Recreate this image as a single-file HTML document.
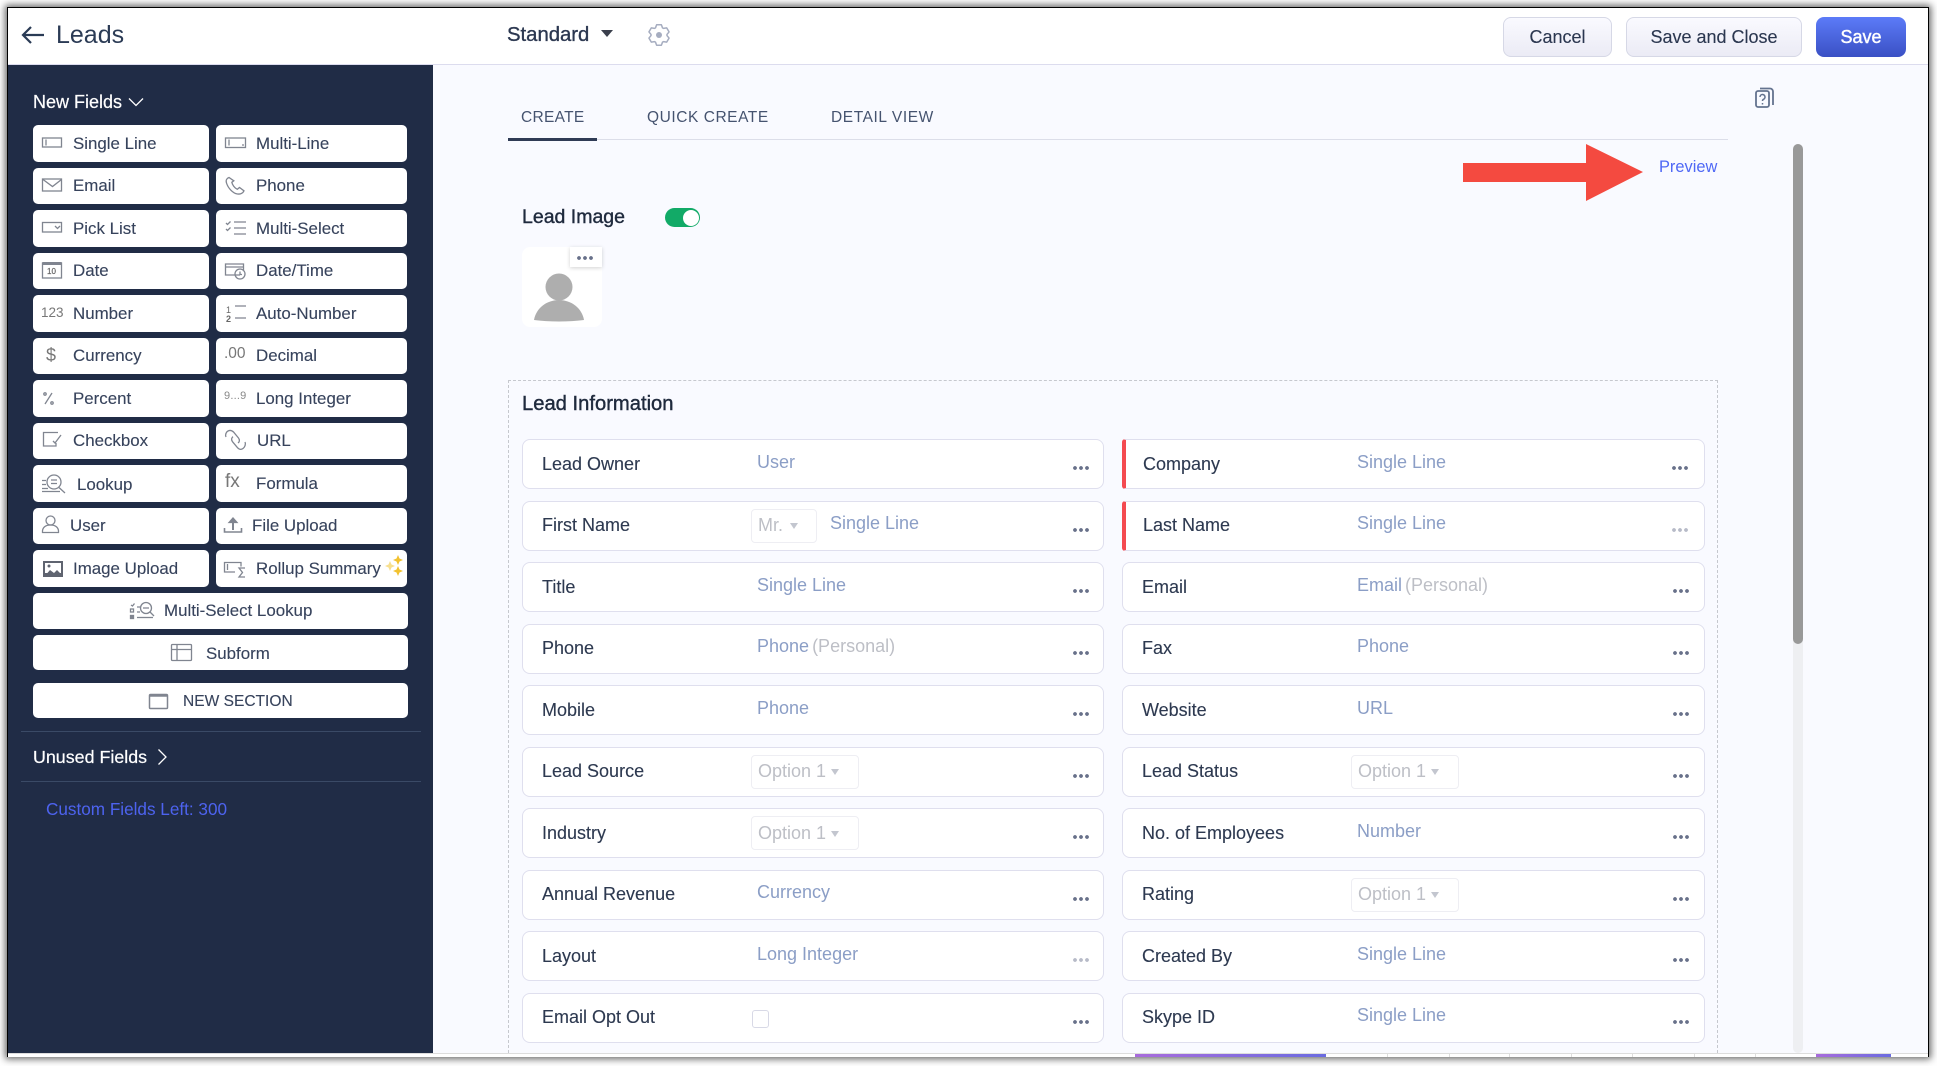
<!DOCTYPE html>
<html><head><meta charset="utf-8"><title>Leads</title>
<style>
*{box-sizing:border-box}
html,body{margin:0;padding:0;width:1937px;height:1066px;overflow:hidden;background:#fff;font-family:"Liberation Sans",sans-serif}
#win{position:absolute;left:7px;top:7px;width:1922px;height:1050px;background:#000;box-shadow:0 0 7px 2px #666}
.a{position:absolute}
.t{position:absolute;white-space:nowrap;line-height:20px}
#head{left:8px;top:8px;width:1920px;height:57px;background:#fff;border-bottom:1px solid #dcdcee}
#main{left:8px;top:65px;width:1920px;height:988px;background:#f9faff}
#side{left:8px;top:65px;width:425px;height:988px;background:#202c46}
#strip{left:8px;top:1053px;width:1920px;height:4px;background:#fff;border-top:1px solid #ddd}
.b{position:absolute;background:#fff;border-radius:5px}
.s{font-size:16.9px;color:#37435c;margin-top:1px;-webkit-text-stroke:.12px #37435c}
.btn{position:absolute;top:17px;height:40px;border-radius:8px;border:1px solid #d6d8e6;background:linear-gradient(#fafaff,#ebebf5);color:#2b3750;font-size:18px;text-align:center;line-height:38px;-webkit-text-stroke:.12px #2b3750}
.row{position:absolute;width:582px;height:50px;background:#fff;border:1px solid #dfdfee;border-radius:8px}
.row.c2{width:583px}
.row.r{border-left:4px solid #f44a50;border-radius:3px 8px 8px 3px}
.row.r .lb{left:17px}.row.r .v{left:231px}
.lb{position:absolute;left:19px;top:13px;font-size:18px;line-height:20px;color:#2d3950;white-space:nowrap;-webkit-text-stroke:.12px #2d3950}
.v{position:absolute;left:234px;top:12px;font-size:18px;line-height:20px;color:#8b9ec6;white-space:nowrap}
.g{color:#bdbfc6;margin-left:-2px}
.d{position:absolute;left:549px;top:26px;width:18px;height:4px;background-image:radial-gradient(circle at 50% 50%,#68718a 1.7px,transparent 2.1px);background-size:6px 4px}
.d.f{background-image:radial-gradient(circle at 50% 50%,#b7bbc8 1.7px,transparent 2.1px)}
.row.c2 .d{left:549px}
.row.c2.r .d{left:545px}
.o{position:absolute;left:228px;top:7px;height:34px;border:1px solid #eeeef3;border-radius:4px;background:#fff}
.o span{position:absolute;left:6px;top:6px;font-size:18px;line-height:20px;color:#bdbfc6;white-space:nowrap}
.o i{position:absolute;top:14px;width:0;height:0;border-left:4.5px solid transparent;border-right:4.5px solid transparent;border-top:6px solid #c3c6cf}
.u .lb{top:14px}
.e .v{top:11px}
.e .o span{top:5px}
.e .o i{top:13px}
</style></head><body>
<div id="win" class="a"></div>
<div id="main" class="a"></div>
<div id="head" class="a"></div>
<div id="side" class="a"></div>

<!-- Header -->
<svg class="a" style="left:20px;top:24px" width="26" height="22" viewBox="0 0 26 22"><path d="M24 11H3M11 3l-8 8 8 8" fill="none" stroke="#2a3b55" stroke-width="2.2"/></svg>
<div class="t" style="left:56px;top:25px;font-size:25px;color:#2b3b55">Leads</div>
<div class="t" style="left:507px;top:25px;font-size:20.300px;color:#2b3750;-webkit-text-stroke:.35px #2b3750">Standard</div>
<svg class="a" style="left:600px;top:30px" width="14" height="8"><path d="M1 0h12L7 7z" fill="#3a3f4c"/></svg>
<svg class="a" style="left:647px;top:23px" width="24" height="24" viewBox="0 0 24 24"><path d="M8.500 4.810L9.640 1.770H14.360L15.500 4.810L16.470 5.370L19.680 4.840L22.040 8.930L19.980 11.440V12.560L22.040 15.070L19.680 19.160L16.470 18.630L15.500 19.190L14.360 22.230H9.640L8.500 19.190L7.530 18.630L4.320 19.160L1.960 15.070L4.020 12.560V11.440L1.960 8.930L4.320 4.840L7.530 5.370Z" fill="none" stroke="#a6adc0" stroke-width="1.500" stroke-linejoin="round"/><circle cx="12" cy="12" r="3" fill="#a6adc0"/></svg>
<div class="btn" style="left:1503px;width:109px">Cancel</div>
<div class="btn" style="left:1626px;width:176px">Save and Close</div>
<div class="btn" style="left:1816px;width:90px;border:0;border-radius:8px;line-height:40px;background:linear-gradient(#5c7bf8,#3a50c4);color:#fff;-webkit-text-stroke:.4px #fff">Save</div>

<!-- Tabs -->
<div class="t" style="left:521px;top:108px;font-size:15.500px;color:#45536f;letter-spacing:.3px">CREATE</div>
<div class="t" style="left:647px;top:108px;font-size:15.500px;color:#45536f;letter-spacing:.55px">QUICK CREATE</div>
<div class="t" style="left:831px;top:108px;font-size:15.500px;color:#45536f;letter-spacing:.58px">DETAIL VIEW</div>
<div class="a" style="left:508px;top:139px;width:1220px;height:1px;background:#dcdee9"></div>
<div class="a" style="left:508px;top:138px;width:89px;height:3px;background:#2f3b55"></div>
<div class="t" style="left:1659px;top:157px;font-size:16.400px;color:#4f68f5">Preview</div>
<svg class="a" style="left:1463px;top:144px" width="181" height="58"><path d="M0 19H123V0L180 28 123 57V38H0z" fill="#f44a40"/></svg>
<svg class="a" style="left:1755px;top:87px" width="20" height="22" viewBox="0 0 20 22" fill="none" stroke="#64738f" stroke-width="1.800"><rect x="1" y="4" width="13" height="16" rx="2"/><path d="M5 1.500h10a3 3 0 0 1 3 3V18"/><path d="M5 10a2.500 2.500 0 1 1 3.500 2.300c-.8.400-1 .9-1 1.700M7.500 16v1.500" stroke-width="1.500"/></svg>
<div class="a" style="left:1793px;top:144px;width:10px;height:909px;background:#eeeff2;border-radius:5px"></div>
<div class="a" style="left:1793px;top:144px;width:10px;height:500px;background:#999;border-radius:5px"></div>

<!-- Lead image -->
<div class="t" style="left:522px;top:207px;font-size:19.500px;color:#1f2a3d;-webkit-text-stroke:.4px #1f2a3d">Lead Image</div>
<div class="a" style="left:665px;top:208px;width:35px;height:19px;border-radius:10px;background:#12aa67"></div>
<div class="a" style="left:683px;top:210px;width:16px;height:16px;border-radius:50%;background:#fff"></div>
<div class="a" style="left:522px;top:247px;width:80px;height:80px;background:#fff;border-radius:8px"></div>
<svg class="a" style="left:530px;top:270px" width="60" height="56"><circle cx="29" cy="17" r="13.500" fill="#aeaeae"/><path d="M4 50C6 38 17 30 29 30s23 8 25 20c-15 2-35 2-50 0z" fill="#aeaeae"/></svg>
<div class="a" style="left:570px;top:247px;width:32px;height:20px;background:#fff;box-shadow:0 1px 4px rgba(0,0,0,.18)"></div>
<div class="d" style="left:576px;top:256px"></div>

<!-- Section -->
<div class="a" style="left:508px;top:380px;width:1210px;height:673px;border:1px dashed #c6c8ce;border-bottom:0"></div>
<div class="t" style="left:522px;top:394px;font-size:20.200px;color:#1f2a3d;-webkit-text-stroke:.4px #1f2a3d">Lead Information</div>

<div class="row u" style="left:522px;top:439px"><span class="lb">Lead Owner</span><span class="v">User</span><i class="d"></i></div>
<div class="row e" style="left:522px;top:501px"><span class="lb">First Name</span><div class="o" style="width:66px"><span>Mr.</span><i style="left:38px"></i></div><span class="v" style="left:307px">Single Line</span><i class="d"></i></div>
<div class="row u" style="left:522px;top:562px"><span class="lb">Title</span><span class="v">Single Line</span><i class="d"></i></div>
<div class="row e" style="left:522px;top:624px"><span class="lb">Phone</span><span class="v">Phone <span class="g">(Personal)</span></span><i class="d"></i></div>
<div class="row u" style="left:522px;top:685px"><span class="lb">Mobile</span><span class="v">Phone</span><i class="d"></i></div>
<div class="row e" style="left:522px;top:747px"><span class="lb">Lead Source</span><div class="o" style="width:108px"><span>Option 1</span><i style="left:79px"></i></div><i class="d"></i></div>
<div class="row u" style="left:522px;top:808px"><span class="lb">Industry</span><div class="o" style="width:108px"><span>Option 1</span><i style="left:79px"></i></div><i class="d"></i></div>
<div class="row e" style="left:522px;top:870px"><span class="lb">Annual Revenue</span><span class="v">Currency</span><i class="d"></i></div>
<div class="row u" style="left:522px;top:931px"><span class="lb">Layout</span><span class="v">Long Integer</span><i class="d f"></i></div>
<div class="row e" style="left:522px;top:993px"><span class="lb">Email Opt Out</span><div class="a" style="left:229px;top:16px;width:17px;height:18px;border:1.500px solid #d8d9e6;border-radius:3px"></div><i class="d"></i></div>

<div class="row c2 r u" style="left:1122px;top:439px"><span class="lb">Company</span><span class="v">Single Line</span><i class="d"></i></div>
<div class="row c2 r e" style="left:1122px;top:501px"><span class="lb">Last Name</span><span class="v">Single Line</span><i class="d f"></i></div>
<div class="row c2 u" style="left:1122px;top:562px"><span class="lb">Email</span><span class="v">Email <span class="g">(Personal)</span></span><i class="d"></i></div>
<div class="row c2 e" style="left:1122px;top:624px"><span class="lb">Fax</span><span class="v">Phone</span><i class="d"></i></div>
<div class="row c2 u" style="left:1122px;top:685px"><span class="lb">Website</span><span class="v">URL</span><i class="d"></i></div>
<div class="row c2 e" style="left:1122px;top:747px"><span class="lb">Lead Status</span><div class="o" style="width:108px"><span>Option 1</span><i style="left:79px"></i></div><i class="d"></i></div>
<div class="row c2 u" style="left:1122px;top:808px"><span class="lb">No. of Employees</span><span class="v">Number</span><i class="d"></i></div>
<div class="row c2 e" style="left:1122px;top:870px"><span class="lb">Rating</span><div class="o" style="width:108px"><span>Option 1</span><i style="left:79px"></i></div><i class="d"></i></div>
<div class="row c2 u" style="left:1122px;top:931px"><span class="lb">Created By</span><span class="v">Single Line</span><i class="d"></i></div>
<div class="row c2 e" style="left:1122px;top:993px"><span class="lb">Skype ID</span><span class="v">Single Line</span><i class="d"></i></div>

<!-- Bottom strip -->
<div id="strip" class="a"></div>
<div class="a" style="left:1135px;top:1054px;width:191px;height:3px;background:linear-gradient(90deg,#a86bdc,#6a6be0)"></div>
<div class="a" style="left:1387px;top:1054px;width:1px;height:3px;background:#ddd"></div>
<div class="a" style="left:1449px;top:1054px;width:1px;height:3px;background:#ddd"></div>
<div class="a" style="left:1509px;top:1054px;width:1px;height:3px;background:#ddd"></div>
<div class="a" style="left:1571px;top:1054px;width:1px;height:3px;background:#ddd"></div>
<div class="a" style="left:1632px;top:1054px;width:1px;height:3px;background:#ddd"></div>
<div class="a" style="left:1694px;top:1054px;width:1px;height:3px;background:#ddd"></div>
<div class="a" style="left:1755px;top:1054px;width:1px;height:3px;background:#ddd"></div>
<div class="a" style="left:1816px;top:1054px;width:75px;height:3px;background:linear-gradient(90deg,#a86bdc,#6a6be0)"></div>

<!-- Sidebar -->
<div class="t" style="left:33px;top:92px;font-size:18px;color:#fff;-webkit-text-stroke:.2px #fff">New Fields</div>
<svg class="a" style="left:128px;top:97px" width="16" height="11"><path d="M1 1.500l7 7 7-7" fill="none" stroke="#fff" stroke-width="1.300"/></svg>

<div class="b" style="left:33px;top:125px;width:176px;height:37px"></div><div class="b" style="left:216px;top:125px;width:191px;height:37px"></div>
<div class="b" style="left:33px;top:168px;width:176px;height:36px"></div><div class="b" style="left:216px;top:168px;width:191px;height:36px"></div>
<div class="b" style="left:33px;top:210px;width:176px;height:37px"></div><div class="b" style="left:216px;top:210px;width:191px;height:37px"></div>
<div class="b" style="left:33px;top:253px;width:176px;height:36px"></div><div class="b" style="left:216px;top:253px;width:191px;height:36px"></div>
<div class="b" style="left:33px;top:295px;width:176px;height:37px"></div><div class="b" style="left:216px;top:295px;width:191px;height:37px"></div>
<div class="b" style="left:33px;top:338px;width:176px;height:36px"></div><div class="b" style="left:216px;top:338px;width:191px;height:36px"></div>
<div class="b" style="left:33px;top:380px;width:176px;height:37px"></div><div class="b" style="left:216px;top:380px;width:191px;height:37px"></div>
<div class="b" style="left:33px;top:423px;width:176px;height:36px"></div><div class="b" style="left:216px;top:423px;width:191px;height:36px"></div>
<div class="b" style="left:33px;top:465px;width:176px;height:37px"></div><div class="b" style="left:216px;top:465px;width:191px;height:37px"></div>
<div class="b" style="left:33px;top:508px;width:176px;height:36px"></div><div class="b" style="left:216px;top:508px;width:191px;height:36px"></div>
<div class="b" style="left:33px;top:550px;width:176px;height:37px"></div><div class="b" style="left:216px;top:550px;width:191px;height:37px"></div>
<div class="b" style="left:33px;top:593px;width:375px;height:36px"></div>
<div class="b" style="left:33px;top:635px;width:375px;height:35px"></div>
<div class="b" style="left:33px;top:683px;width:375px;height:35px"></div>

<div class="t s" style="left:73px;top:133px">Single Line</div><div class="t s" style="left:256px;top:133px">Multi-Line</div>
<div class="t s" style="left:73px;top:175px">Email</div><div class="t s" style="left:256px;top:175px">Phone</div>
<div class="t s" style="left:73px;top:218px">Pick List</div><div class="t s" style="left:256px;top:218px">Multi-Select</div>
<div class="t s" style="left:73px;top:260px">Date</div><div class="t s" style="left:256px;top:260px">Date/Time</div>
<div class="t s" style="left:73px;top:303px">Number</div><div class="t s" style="left:256px;top:303px">Auto-Number</div>
<div class="t s" style="left:73px;top:345px">Currency</div><div class="t s" style="left:256px;top:345px">Decimal</div>
<div class="t s" style="left:73px;top:388px">Percent</div><div class="t s" style="left:256px;top:388px">Long Integer</div>
<div class="t s" style="left:73px;top:430px">Checkbox</div><div class="t s" style="left:257px;top:430px">URL</div>
<div class="t s" style="left:77px;top:474px">Lookup</div><div class="t s" style="left:256px;top:473px">Formula</div>
<div class="t s" style="left:70px;top:515px">User</div><div class="t s" style="left:252px;top:515px">File Upload</div>
<div class="t s" style="left:73px;top:558px">Image Upload</div><div class="t s" style="left:256px;top:558px">Rollup Summary</div>
<div class="t s" style="left:164px;top:600px">Multi-Select Lookup</div>
<div class="t s" style="left:206px;top:643px">Subform</div>
<div class="t s" style="left:183px;top:691px;font-size:15.550px">NEW SECTION</div>

<svg class="a" style="left:0;top:0" width="440" height="730" fill="none" stroke="#808590" stroke-width="1.300" font-family="Liberation Sans">
<!-- single line -->
<rect x="42.500" y="138" width="19" height="9"/><path d="M46 139.500v6"/>
<!-- multi -->
<rect x="225.500" y="138" width="20" height="9.500"/><path d="M229 139.500v6M242 145h2"/>
<!-- email -->
<rect x="42.500" y="179" width="19" height="12"/><path d="M43 179.500l9.500 7 9-7"/>
<!-- phone -->
<path d="M229 177.500c-2 .7-3.500 2.500-2.500 5.500 1.500 5 6.500 10.500 11 11 3 .4 5.500-1 6.500-3.200l-4.500-3.300-2.200 1.800c-2.500-1-5-4.500-5.500-7l2-1.500z"/>
<!-- pick list -->
<rect x="42.500" y="222.500" width="19" height="9.500"/><path d="M55 226l2.500 2.500 2.500-2.500"/>
<!-- multi select -->
<path d="M226 223l1.500 1.500 3-3M226 229l1.500 1.500 3-3M234 222h12M234 228h12M234 234h12"/>
<!-- date -->
<rect x="42.500" y="263" width="19" height="15"/><path d="M42.500 263.500h19" stroke-width="3"/>
<!-- date/time -->
<path d="M240 275h-14.500v-11h18v6M225.500 267h18"/><circle cx="240" cy="274" r="5"/><path d="M240 271.500v3h2"/>
<!-- auto number -->
<path d="M235 306h11M235 318h11"/>
<!-- percent -->
<path d="M52 393l-7 11"/><circle cx="45" cy="394" r="1.200"/><circle cx="52" cy="403" r="1.200"/>
<!-- checkbox -->
<path d="M58 432.500H43.500v13.500H56v-3"/><path d="M53 441l2 2 6-8"/>
<!-- url -->
<path d="M226 437c-1-2 0-5 2-6s4-.5 5.500 1l5 6c1.500 2 1 4-.5 5M245 442c1 2 0 5-2 6.500s-4 .8-5.500-.8l-5-6c-1.500-2-1-4 .5-5"/>
<!-- lookup -->
<path d="M42 480.500h4M42 484.500h4M42 488.500h6M42 491.500h18"/><circle cx="54" cy="482" r="7"/><path d="M51 480h6M51 483.500h6M59 487.500l6 5.500"/>
<!-- user -->
<circle cx="50.500" cy="520.500" r="4.500"/><path d="M42.500 532.500c-.5-5 3-7.500 8-7.500s8.500 2.500 8 7.500z"/>
<!-- upload -->
<path d="M224.500 528v4h17v-4" stroke-width="1.600"/><path d="M233 530v-10" stroke-width="2"/><path d="M229 522.500l4-4.500 4 4.500z" fill="#808590"/>
<!-- image -->
<rect x="43" y="561" width="20" height="16" fill="#5f6470" stroke="none"/><rect x="45" y="563" width="16" height="10" fill="#fff" stroke="none"/><path d="M44 577l6-7 4 3 3-3 5 5v2z" fill="#5f6470" stroke="none"/><circle cx="49" cy="566" r="1.500" fill="#5f6470" stroke="none"/>
<!-- rollup -->
<path d="M235 572h-10.500v-9.500H241v4M227.500 564v6"/><path d="M245 568h-6l3.500 4.500-3.500 4.500h6"/>
<!-- multi-select lookup -->
<path d="M131 605l1.500 1 2-2.500M137 607h3M137 612h3"/><rect x="130.500" y="609" width="3" height="3"/><rect x="130.500" y="615.500" width="3" height="3" fill="#808590"/><path d="M137 617.500h16"/><circle cx="146" cy="608" r="5.500"/><path d="M143 608h6M150 612l4 4"/>
<!-- subform -->
<rect x="171.500" y="644.500" width="20" height="16" rx="1"/><path d="M171.500 649.500h20M177 645v15"/>
<!-- new section -->
<rect x="149.500" y="694.500" width="18" height="14" rx="1" stroke-width="1.500"/><path d="M149.500 695.500h18" stroke-width="2.500"/>
</svg>
<svg class="a" style="left:0;top:0" width="440" height="730">
<path d="M398 555l1.500 3.500 3.500 1.500-3.500 1.500-1.500 3.500-1.500-3.500-3.500-1.500 3.500-1.500zM398 566l1.500 3.500 3.500 1.500-3.500 1.500-1.500 3.500-1.500-3.500-3.500-1.500 3.500-1.500z" fill="#f2c230"/>
<path d="M390 561l1.500 3.500 3.500 1.500-3.500 1.500-1.500 3.500-1.500-3.500-3.500-1.500 3.500-1.500z" fill="#f7df8e"/>
</svg>
<div class="t" style="left:47px;top:262px;font-size:8px;color:#666;-webkit-text-stroke:.2px #666">10</div>
<div class="t" style="left:41px;top:303px;font-size:13.500px;color:#777">123</div>
<div class="t" style="left:226px;top:300px;font-size:9px;color:#666">1</div>
<div class="t" style="left:226px;top:309px;font-size:9px;color:#666;font-weight:bold">2</div>
<div class="t" style="left:46px;top:345px;font-size:18px;color:#777">$</div>
<div class="t" style="left:224px;top:344px;font-size:15.500px;color:#777">.00</div>
<div class="t" style="left:224px;top:386px;font-size:11px;color:#888;letter-spacing:.2px">9...9</div>
<div class="t" style="left:225px;top:472px;font-size:19px;color:#777">fx</div>

<div class="a" style="left:21px;top:731px;width:400px;height:1px;background:#3a4a66"></div>
<div class="t" style="left:33px;top:747px;font-size:17.850px;color:#fff;-webkit-text-stroke:.2px #fff">Unused Fields</div>
<svg class="a" style="left:157px;top:748px" width="11" height="18"><path d="M1.500 1.500L9 9l-7.500 7.500" fill="none" stroke="#fff" stroke-width="1.300"/></svg>
<div class="a" style="left:21px;top:781px;width:400px;height:1px;background:#3a4a66"></div>
<div class="t" style="left:46px;top:799px;font-size:17.150px;color:#4d63ef">Custom Fields Left: 300</div>
</body></html>
